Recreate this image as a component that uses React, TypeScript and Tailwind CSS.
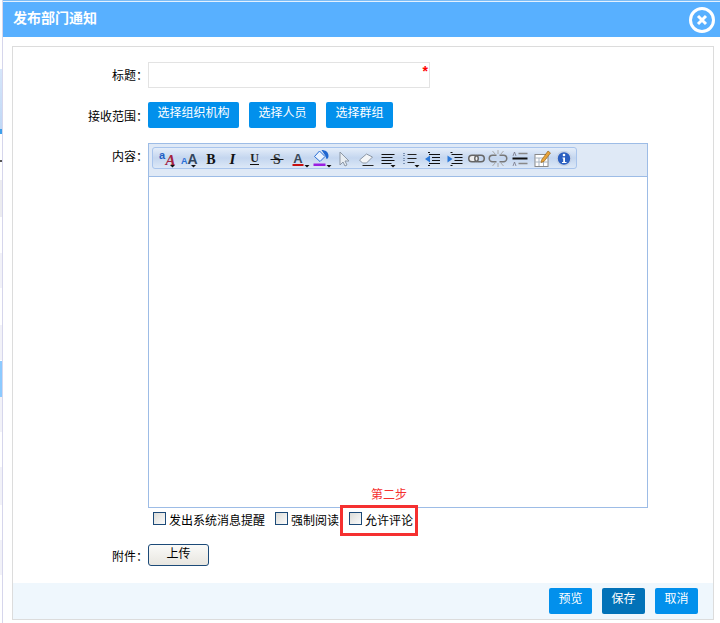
const cjk = { fontFamily: '"Liberation Sans", "Noto Sans CJK SC", sans-serif' };

function Arrow({ x = 11 }: { x?: number }) {
  return <path d={`M${x} 15h5l-2.500 2.500z`} fill="#111" />;
}

const serif = "Liberation Serif";
const sans = "Liberation Sans";

// toolbar icons, drawn around x=8.5 in a 17px high cell
const icons: { w: number; el: React.ReactNode }[] = [
  {
    w: 23,
    el: (
      <>
        <text x="1" y="9" fontSize="11" fontWeight="700" fill="#1f5fc4" fontFamily={sans}>a</text>
        <text x="7.500" y="15" fontSize="15" fontWeight="700" fontStyle="italic" fill="#a3233f" fontFamily={serif}>A</text>
        <Arrow x={12} />
      </>
    ),
  },
  {
    w: 22,
    el: (
      <>
        <text x="0.500" y="14" fontSize="9" fontWeight="700" fill="#2a6fd6" fontFamily={sans}>A</text>
        <text x="7" y="14" fontSize="14" fontWeight="700" fill="#33475f" fontFamily={sans}>A</text>
        <Arrow x={10.5} />
      </>
    ),
  },
  {
    w: 22,
    el: <text x="8.500" y="14" fontSize="14" fontWeight="700" textAnchor="middle" fill="#111" fontFamily={serif}>B</text>,
  },
  {
    w: 21,
    el: <text x="8.500" y="14" fontSize="15" fontWeight="700" fontStyle="italic" textAnchor="middle" fill="#111" fontFamily={serif}>I</text>,
  },
  {
    w: 23,
    el: (
      <>
        <text x="8.500" y="12" fontSize="12" fontWeight="700" textAnchor="middle" fill="#222" fontFamily={serif}>U</text>
        <path d="M4 14.500h9" stroke="#111" />
      </>
    ),
  },
  {
    w: 22,
    el: (
      <>
        <text x="8.500" y="14" fontSize="14" fontWeight="700" textAnchor="middle" fill="#333" fontFamily={serif}>S</text>
        <path d="M2 9.500h13" stroke="#111" />
      </>
    ),
  },
  {
    w: 22,
    el: (
      <>
        <text x="7.500" y="12.500" fontSize="13" fontWeight="700" textAnchor="middle" fill="#3b4a5a" fontFamily={sans}>A</text>
        <path d="M2 14h11v2H2z" fill="#c81010" />
        <Arrow x={14} />
      </>
    ),
  },
  {
    w: 22,
    el: (
      <>
        <path d="M2 6.500L7 1l5.500 5.500-5 5z" fill="#e8f2ff" stroke="#2a6fd6" />
        <path d="M9 0c4 0 7 2 7 6 0 2-1 3-2 3l-1-3z" fill="#1f66d0" />
        <path d="M1 13.500h12v2.500H1z" fill="#9a1ee0" />
        <Arrow x={14} />
      </>
    ),
  },
  {
    w: 23,
    el: <path d="M5 2v13l3-3 2 4 2-1-2-4h4z" fill="#e8edf2" stroke="#8d98a6" />,
  },
  {
    w: 22,
    el: (
      <>
        <path d="M2 10l7-6 6 3-6 6H5z" fill="#f4f6f8" stroke="#8d98a6" />
        <path d="M5 15.500h11" stroke="#222" />
      </>
    ),
  },
  {
    w: 22,
    el: (
      <>
        <path d="M2 4.500h13M2 7.500h11M2 10.500h13M2 13.500h10" stroke="#111" />
        <Arrow x={11} />
      </>
    ),
  },
  {
    w: 22,
    el: (
      <>
        <path d="M2.500 3v3M2.500 8v3M2.500 13v2" stroke="#7c93b5" strokeWidth="2" strokeDasharray="1 1" />
        <path d="M6 4.500h9M6 8.500h9M6 12.500h7" stroke="#222" />
        <Arrow x={13} />
      </>
    ),
  },
  {
    w: 23,
    el: (
      <>
        <path d="M5 4.500h11M8 7.500h8M8 10.500h8M5 13.500h11M4 2.500h2M4 15.500h2" stroke="#111" />
        <path d="M1 9l5-3.500v7z" fill="#2a78d8" />
      </>
    ),
  },
  {
    w: 22,
    el: (
      <>
        <path d="M5 4.500h11M8 7.500h8M8 10.500h8M5 13.500h11M4 2.500h2M4 15.500h2" stroke="#111" />
        <path d="M6 9L1 5.500v7z" fill="#2a78d8" />
      </>
    ),
  },
  {
    w: 21,
    el: (
      <>
        <rect x="0.750" y="5.250" width="9.500" height="6.500" rx="3.250" fill="#eee" stroke="#666" strokeWidth="1.500" />
        <rect x="6.750" y="5.250" width="9.500" height="6.500" rx="3.250" fill="none" stroke="#666" strokeWidth="1.500" />
      </>
    ),
  },
  {
    w: 22,
    el: (
      <>
        <path d="M7 5.250H3a3.250 3.250 0 0 0 0 6.500h4M10 5.250h4a3.250 3.250 0 0 1 0 6.500h-4" fill="none" stroke="#777" strokeWidth="1.500" />
        <path d="M8.500 0v4M3 1l3 3.500M14 1l-3 3.500M8.500 13v4M3 16l3-3.500M14 16l-3-3.500" stroke="#aaa" />
      </>
    ),
  },
  {
    w: 22,
    el: (
      <>
        <path d="M7 3.500h9M7 13.500h9" stroke="#888" strokeWidth="1.500" />
        <path d="M1 8.500h15" stroke="#111" strokeWidth="2" />
        <path d="M1.500 6l1.500-4 1.500 4M1.500 16l1.500-4 1.500 4" fill="none" stroke="#778" strokeWidth="0.800" />
      </>
    ),
  },
  {
    w: 22,
    el: (
      <>
        <rect x="1.500" y="4.500" width="13" height="12" fill="#fff" stroke="#8a8a8a" />
        <path d="M1.500 8h13M5.500 8v8M10 8v8M1.500 12h13" stroke="#a9b4c0" />
        <path d="M8 10l6.500-9 2.500 2-6.500 8.500-3 1z" fill="#e8a33a" stroke="#8a5a10" strokeWidth="0.600" />
      </>
    ),
  },
  {
    w: 22,
    el: (
      <>
        <circle cx="8.500" cy="8.500" r="7" fill="#2b5fc0" stroke="#c7d3e6" strokeWidth="1.500" />
        <circle cx="8.500" cy="5" r="1.300" fill="#fff" />
        <path d="M7 7.500h2.500V12H11v1H6.500v-1h1.200V8.500H7z" fill="#fff" />
      </>
    ),
  },
];

function BlueButton({ children, dark, className = "" }: { children: string; dark?: boolean; className?: string }) {
  return (
    <button
      className={`h-[26px] rounded-[2px] pb-[4px] text-[12px] leading-none text-white ${dark ? "bg-[#0272b8]" : "bg-[#0290ec]"} ${className}`}
    >
      {children}
    </button>
  );
}

function Check({ label, className = "" }: { label: string; className?: string }) {
  return (
    <label className={`flex items-start ${className}`}>
      <span className="h-[13px] w-[13px] border border-[#1c4a78] bg-gradient-to-br from-[#dcdcd8] to-[#fbfbfb]" />
      <span className="ml-[3px] mt-[2px] text-[12px] leading-[14px] text-black">{label}</span>
    </label>
  );
}

function LeftStrip() {
  return (
    <div className="flex h-full w-[3px] shrink-0 flex-col border-r border-[#d6d6ec] bg-white">
      <div className="h-[69px]" />
      <div className="h-[60px] bg-gradient-to-b from-[#d6e6fa] to-[#c0d8f6]" />
      <div className="h-[5px] bg-[#3fa0ea]" />
      <div className="h-[26px]" />
      <div className="h-[2px] bg-[#555]" />
      <div className="h-[18px]" />
      <div className="h-[37px] bg-[#ececf0]" />
      <div className="h-[36px]" />
      <div className="h-[35px] bg-[#f2f2f8]" />
      <div className="h-[37px]" />
      <div className="h-[35px] bg-[#f2f2f8]" />
      <div className="h-[1px]" />
      <div className="h-[36px] bg-[#8ccaff]" />
      <div className="h-[35px] bg-[#f2f2f8]" />
      <div className="h-[35px]" />
      <div className="h-[38px] bg-[#f2f2f8]" />
      <div className="h-[35px]" />
      <div className="h-[35px] bg-[#f2f2f8]" />
    </div>
  );
}

export default function App() {
  return (
    <div className="flex h-[623px] w-[720px] overflow-hidden bg-white" style={cjk}>
      <LeftStrip />
      <div className="flex min-w-0 flex-1 flex-col">
        <div className="h-[1px] bg-[#7cbcf5]" />
        <div className="h-[1px] bg-[#e4f1fe]" />
        <header className="flex h-[35px] shrink-0 items-center justify-between bg-[#58b0ff] pl-[10px] pr-[4px]">
          <h1 className="pb-[3px] text-[14px] font-bold text-white">发布部门通知</h1>
          <svg width="28" height="28" viewBox="0 0 28 28" className="mt-[1px]">
            <circle cx="14" cy="14" r="11.500" fill="none" stroke="#fff" strokeWidth="3" />
            <path d="M10 10l8 8M18 10l-8 8" stroke="#fff" strokeWidth="3" />
          </svg>
        </header>
        <main className="ml-[9px] mr-[6px] mt-[9px] flex h-[574px] flex-col border border-[#dcdcdc]">
          <div className="flex-1 pt-[15px]">
            <div className="flex items-center">
              <span className="w-[135px] pt-[2px] text-right text-[12px] text-black">标题：</span>
              <div className="relative h-[26px] w-[282px] border border-[#e3e3e3]">
                <span className="absolute right-[1px] top-[1px] text-[14px] font-bold leading-[14px] text-[#f00]">*</span>
              </div>
            </div>
            <div className="mt-[14px] flex items-center">
              <span className="w-[135px] pt-[4px] text-right text-[12px] text-black">接收范围：</span>
              <div className="flex gap-[10px]">
                <BlueButton className="w-[91px]">选择组织机构</BlueButton>
                <BlueButton className="w-[67px]">选择人员</BlueButton>
                <BlueButton className="w-[67px]">选择群组</BlueButton>
              </div>
            </div>
            <div className="mt-[15px] flex">
              <span className="mt-[5px] w-[135px] text-right text-[12px] text-black">内容：</span>
              <div className="w-[500px]">
                <div className="h-[365px] border border-[#9dbce6]">
                  <div className="h-[33px] border-b border-[#9dbce6] bg-[#dfe9f6] pl-[3px] pt-[3px]">
                    <div className="flex h-[22px] w-[425px] items-center rounded-[3px] border border-[#a8c4ec] bg-gradient-to-b from-[#e4edf9] via-[#c4d6ef] to-[#dce8f7] pl-[2px]">
                      {icons.map((icon, i) => (
                        <svg
                          key={i}
                          width={icon.w}
                          height="17"
                          viewBox={`${8.5 - icon.w / 2} 0 ${icon.w} 17`}
                          className="shrink-0 overflow-visible"
                        >
                          {icon.el}
                        </svg>
                      ))}
                    </div>
                  </div>
                </div>
                <div className="relative flex h-[28px] pl-[5px] pt-[4px]">
                  <Check label="发出系统消息提醒" />
                  <Check label="强制阅读" className="ml-[10px]" />
                  <Check label="允许评论" className="ml-[10px]" />
                  <div className="absolute left-[192px] top-[-3px] h-[31px] w-[78px] border-[3px] border-[#f53030]" />
                  <span className="absolute left-[223px] top-[-20px] whitespace-nowrap text-[12px] leading-[14px] text-[#f53030]">第二步</span>
                </div>
              </div>
            </div>
            <div className="mt-[8px] flex items-center">
              <span className="w-[135px] pt-[3px] text-right text-[12px] text-black">附件：</span>
              <button className="h-[22px] w-[61px] rounded-[3px] border border-[#1c4a78] bg-gradient-to-b from-[#fafaf8] to-[#e8e6e0] pb-[3px] text-[12px] leading-none text-black">
                上传
              </button>
            </div>
          </div>
          <footer className="flex h-[36px] shrink-0 items-start justify-end gap-[10px] bg-[#eff7fd] pr-[15px] pt-[5px]">
            <BlueButton className="w-[43px]">预览</BlueButton>
            <BlueButton dark className="w-[43px]">保存</BlueButton>
            <BlueButton className="w-[43px]">取消</BlueButton>
          </footer>
        </main>
      </div>
    </div>
  );
}
